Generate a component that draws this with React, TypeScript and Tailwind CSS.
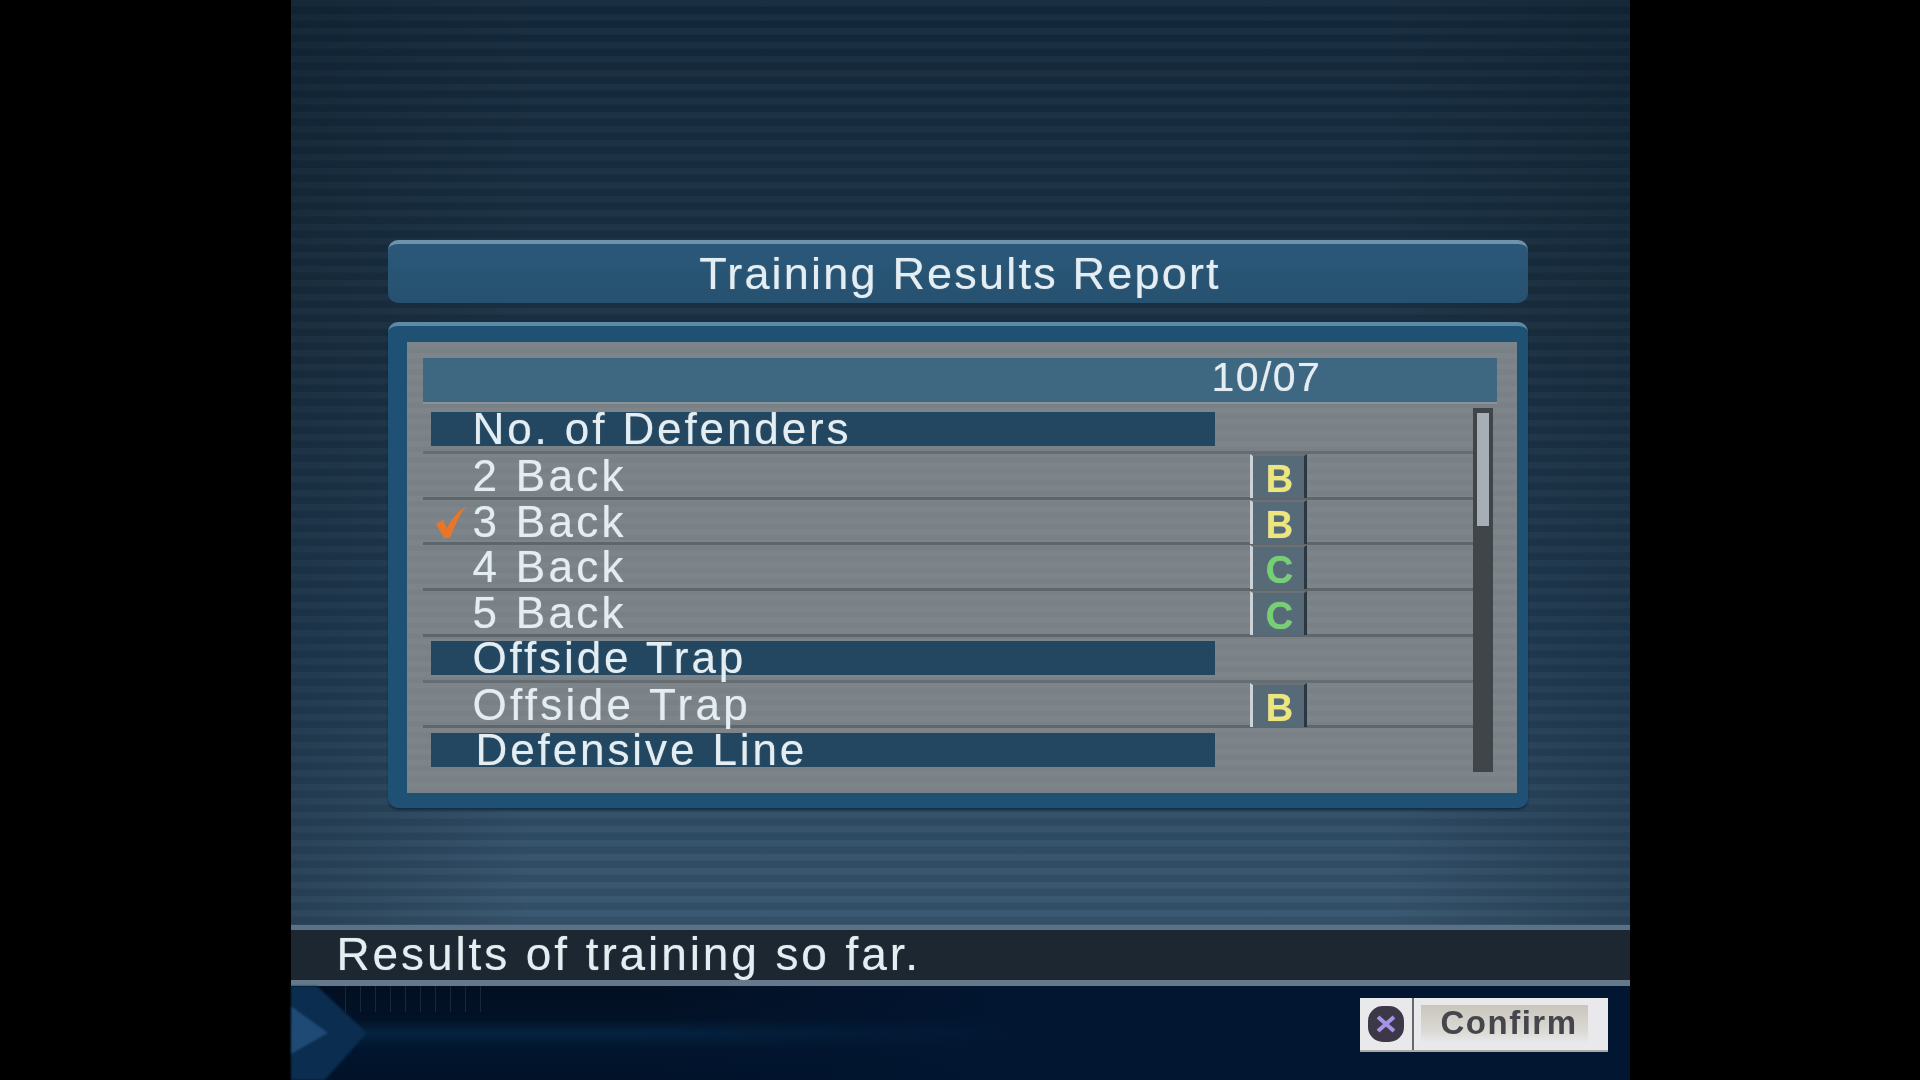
const rows: { label: string; kind: 'section' | 'item'; grade?: 'B' | 'C'; checked?: boolean; indent?: number }[] = [
  { label: 'No. of Defenders', kind: 'section' },
  { label: '2 Back', kind: 'item', grade: 'B' },
  { label: '3 Back', kind: 'item', grade: 'B', checked: true },
  { label: '4 Back', kind: 'item', grade: 'C' },
  { label: '5 Back', kind: 'item', grade: 'C' },
  { label: 'Offside Trap', kind: 'section' },
  { label: 'Offside Trap', kind: 'item', grade: 'B' },
  { label: 'Defensive Line', kind: 'section', indent: 45 },
]

function Row({ row, last }: { row: (typeof rows)[number]; last: boolean }) {
  if (row.kind === 'section') {
    return (
      <div className={`h-[45.75px] flex items-center pl-[8px] border-b-[3px] ${last ? 'border-transparent' : 'border-[#656d72]'}`}>
        <div
          className={`w-[784px] h-[34px] bg-[#234761] flex items-center text-[44px] tracking-[2.9px] leading-none ${row.indent ? 'pl-[45px]' : 'pl-[42px]'}`}
        >
          {row.label}
        </div>
      </div>
    )
  }
  return (
    <div className="h-[45.75px] grid grid-cols-[827px_57px_1fr] border-b-[3px] border-[#5e666b]">
      <div className="flex items-center pl-[12px] text-[44px] tracking-[3.3px] leading-none">
        <div className="w-[38px] flex items-center shrink-0">
          {row.checked && (
            <svg width="32" height="34" viewBox="0 0 32 34">
              <path d="M1 19 L8 15 L12 23 Q18 10 31 1 Q22 14 15 33 L9 33 Z" fill="#e8762a" />
            </svg>
          )}
        </div>
        <span>{row.label}</span>
      </div>
      <div className="border-l-[3px] border-[#ccd3d6] border-r-[3px] border-r-[#2b3740] border-t-[2px] border-t-[#6a7278] bg-[#566a78] flex items-center justify-center pt-[4px] pl-[3px]">
        <span className={`font-bold text-[38px] leading-none ${row.grade === 'B' ? 'text-[#ece67c]' : 'text-[#74d070]'}`}>
          {row.grade}
        </span>
      </div>
      <div />
    </div>
  )
}

export default function App() {
  return (
    <div className="h-screen bg-black flex justify-center overflow-hidden font-['Liberation_Sans',Arial,sans-serif] text-[#e4edf1] [text-shadow:0_0_1px_rgba(230,240,245,0.55)]">
      <div className="w-[1339px] h-full flex flex-col bg-[image:linear-gradient(90deg,rgba(12,26,38,0.3),transparent_18%,transparent_82%,rgba(12,26,38,0.3)),repeating-linear-gradient(180deg,rgba(255,255,255,0.025)_0px,rgba(255,255,255,0.025)_6px,rgba(0,0,0,0.07)_7px,rgba(0,0,0,0.07)_14px),linear-gradient(180deg,#14293c_0%,#1c3346_30%,#25425c_60%,#385670_86%)]">
        {/* main area */}
        <div className="h-[925px] shrink-0 pt-[240px] pl-[97px] pr-[102px] flex flex-col">
          <div className="h-[63px] shrink-0 rounded-[10px] border-t-[4px] border-[#6f93ab] bg-[linear-gradient(180deg,#2b587a,#26516f)] flex items-center justify-center pl-[5px] text-[45px] tracking-[2.2px] leading-none blur-[0.7px]">
            Training Results Report
          </div>
          <div className="mt-[19px] h-[486px] shrink-0 rounded-[10px] bg-[#1f5175] border-t-[4px] border-t-[#5f8aa6] pt-[16px] pl-[19px] pr-[11px] pb-[15px] shadow-[0_2px_2px_rgba(10,30,50,0.6)]">
            <div className="h-full bg-[image:repeating-linear-gradient(180deg,rgba(255,255,255,0.015)_0px,rgba(255,255,255,0.015)_5px,rgba(0,0,0,0.015)_6px,rgba(0,0,0,0.015)_11px),linear-gradient(180deg,#7b8388,#7b8388)] pt-[16px] pl-[16px] pr-[20px]">
              <div className="h-[46px] bg-[#3e6782] border-b-[2px] border-[#8a9399] flex items-center text-[41px] leading-none tracking-[1.4px] pl-[789px] pb-[5px] blur-[0.7px]">
                10/07
              </div>
              <div className="mt-[4px] flex blur-[0.7px]">
                <div className="w-[1050px]">
                  {rows.map((row, i) => (
                    <Row key={i} row={row} last={i === rows.length - 1} />
                  ))}
                </div>
                <div className="w-[20px] h-[364px] bg-[#3f4549] pt-[5px] px-[4px]">
                  <div className="h-[113px] bg-[#a5afb5]" />
                </div>
              </div>
            </div>
          </div>
        </div>

        {/* status line */}
        <div className="h-[61px] shrink-0 bg-[#1c2731] border-t-[5px] border-t-[#5b7286] border-b-[6px] border-b-[#66798a] flex items-center pl-[46px] pb-[2px] text-[46px] tracking-[2.9px] leading-none">
          <span className="blur-[0.7px]">Results of training so far.</span>
        </div>

        {/* footer */}
        <div className="relative flex-1 bg-[image:linear-gradient(90deg,transparent_25%,#021632_55%),linear-gradient(180deg,#020f22_0%,#021226_35%,#05233f_50%,#02152e_66%,#011229_100%)] flex justify-end items-start pt-[12px] pr-[22px] [text-shadow:none]">
          <svg className="absolute left-0 top-0 blur-[1px]" width="90" height="94" viewBox="0 0 90 94">
            <path d="M0 0 L26 0 L76 47 L34 94 L0 94 Z" fill="#0a2d50" />
            <path d="M0 20 L37 47 L0 68 Z" fill="#1f4a75" />
          </svg>
          <div className="absolute left-[54px] top-0 w-[136px] h-[26px] bg-[repeating-linear-gradient(90deg,rgba(120,150,170,0.18)_0px,rgba(120,150,170,0.18)_1px,transparent_1px,transparent_15px)]" />
          <div className="w-[248px] h-[54px] flex bg-[#e9e9ec] border-b-[2px] border-[#a9aaa8] blur-[0.7px]">
            <div className="w-[54px] shrink-0 border-r-[2px] border-[#66686a] flex items-center justify-center">
              <svg width="38" height="38" viewBox="0 0 38 38">
                <rect x="1" y="1" width="36" height="36" rx="15" fill="#3d3848" />
                <path d="M11 12 L27 26 M27 12 L11 26" stroke="#a692e6" strokeWidth="4" />
              </svg>
            </div>
            <div className="flex-1 m-[7px] mr-[20px] bg-[linear-gradient(180deg,#c8c6bc,#dcdad5_70%,#e9e9ec)] flex items-center pl-[20px] pb-[4px] text-[#45454c] text-[33px] font-bold tracking-[1.5px] leading-none">
              Confirm
            </div>
          </div>
        </div>
      </div>
    </div>
  )
}
